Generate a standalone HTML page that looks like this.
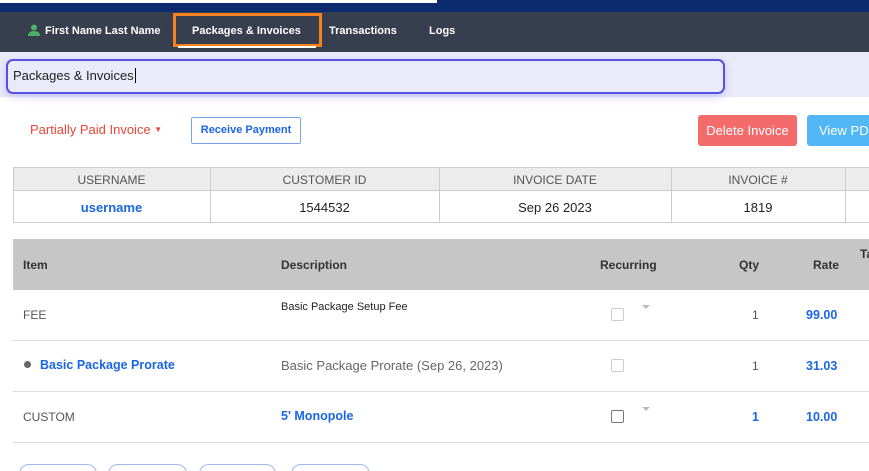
<!DOCTYPE html>
<html><head><style>
*{margin:0;padding:0;box-sizing:border-box}
html,body{width:869px;height:471px;overflow:hidden}
body{background:#fff;font-family:"Liberation Sans",Arial,sans-serif;position:relative}
.a{position:absolute;white-space:nowrap}
.nav{color:#fff;font-weight:bold;font-size:11px;top:25px}
.th{font-size:12px;color:#555;text-align:center;top:173px}
.td{font-size:13px;color:#222;text-align:center;top:200px}
.ih{font-size:12px;font-weight:bold;color:#333;top:258px}
.cb{position:absolute;width:13px;height:13px;border:1.5px solid #ccc;border-radius:2px}
.tri{position:absolute;width:0;height:0;border-left:4px solid transparent;border-right:4px solid transparent;border-top:4px solid #bbb}
.blue{color:#1a66e8;font-weight:bold}
.hl{position:absolute;left:13px;right:0;height:1px;background:#ddd}
.pill{position:absolute;top:464px;height:20px;border:1px solid #9cb9f0;border-radius:10px}
</style></head><body>
<div class="a" style="left:0;top:0;width:869px;height:12px;background:#0c2a6e"></div>
<div class="a" style="left:0;top:0;width:437px;height:3px;background:#fff"></div>
<div class="a" style="left:0;top:12px;width:869px;height:40px;background:#373e4e"></div>
<svg class="a" style="left:28px;top:24px" width="12" height="12" viewBox="0 0 12 12"><circle cx="6" cy="3.5" r="3" fill="#4caf6a"/><path d="M0 12 Q0 7 6 7 Q12 7 12 12Z" fill="#4caf6a"/></svg>
<div class="a nav" style="left:45px">First Name Last Name</div>
<div class="a" style="left:173px;top:13px;width:149px;height:34px;border:3px solid #f5821f"></div>
<div class="a" style="left:178px;top:46px;width:138px;height:2px;background:#fff"></div>
<div class="a nav" style="left:192px">Packages &amp; Invoices</div>
<div class="a nav" style="left:329px">Transactions</div>
<div class="a nav" style="left:429px">Logs</div>
<div class="a" style="left:0;top:52px;width:869px;height:45px;background:#e9ebf9"></div>
<div class="a" style="left:6px;top:59px;width:719px;height:35px;border:2.5px solid #5a4fe0;border-radius:7px;background:#e9ebf9;box-shadow:0 3px 8px rgba(90,79,224,0.25)"></div>
<div class="a" style="left:13px;top:68px;font-size:13px;color:#222">Packages &amp; Invoices<span style="border-left:1px solid #000;margin-left:1px"></span></div>
<div class="a" style="left:30px;top:122px;font-size:13px;color:#e8473a">Partially Paid Invoice <span style="font-size:8px;vertical-align:2px">▼</span></div>
<div class="a" style="left:191px;top:117px;width:110px;height:27px;border:1px solid #7aa3ea;border-radius:2px;color:#1a66e8;font-size:11px;font-weight:bold;text-align:center;line-height:25px">Receive Payment</div>
<div class="a" style="left:698px;top:115px;width:99px;height:31px;background:#f36b6b;border-radius:3px;color:#fff;font-size:13px;text-align:center;line-height:31px">Delete Invoice</div>
<div class="a" style="left:807px;top:115px;width:80px;height:31px;background:#52b8f5;border-radius:3px;color:#fff;font-size:13px;line-height:31px;padding-left:12px">View PDF</div>
<div class="a" style="left:13px;top:167px;width:870px;height:56px;border:1px solid #ccc"></div>
<div class="a" style="left:13px;top:167px;width:870px;height:24px;background:#ececec;border:1px solid #ccc"></div>
<div class="a" style="left:210px;top:167px;width:1px;height:56px;background:#ccc"></div>
<div class="a" style="left:439px;top:167px;width:1px;height:56px;background:#ccc"></div>
<div class="a" style="left:671px;top:167px;width:1px;height:56px;background:#ccc"></div>
<div class="a" style="left:845px;top:167px;width:1px;height:56px;background:#ccc"></div>
<div class="a th" style="left:13px;width:197px">USERNAME</div>
<div class="a th" style="left:210px;width:229px">CUSTOMER ID</div>
<div class="a th" style="left:439px;width:232px">INVOICE DATE</div>
<div class="a th" style="left:671px;width:174px">INVOICE #</div>
<div class="a td blue" style="left:13px;width:197px">username</div>
<div class="a td" style="left:210px;width:229px">1544532</div>
<div class="a td" style="left:439px;width:232px">Sep 26 2023</div>
<div class="a td" style="left:671px;width:174px">1819</div>
<div class="a" style="left:13px;top:239px;width:856px;height:51px;background:#c6c6c6"></div>
<div class="a ih" style="left:23px">Item</div>
<div class="a ih" style="left:281px">Description</div>
<div class="a ih" style="left:600px">Recurring</div>
<div class="a ih" style="left:739px">Qty</div>
<div class="a ih" style="left:813px">Rate</div>
<div class="a ih" style="left:860px;top:247px">Ta</div>
<div class="hl" style="top:340px"></div>
<div class="hl" style="top:391px"></div>
<div class="hl" style="top:442px"></div>
<div class="a" style="left:23px;top:308px;font-size:12px;color:#555">FEE</div>
<div class="a" style="left:281px;top:301px;font-size:11px;color:#222">Basic Package Setup Fee</div>
<div class="cb" style="left:611px;top:308px"></div><div class="tri" style="left:642px;top:305px"></div>
<div class="a" style="left:752px;top:308px;font-size:12px;color:#555">1</div>
<div class="a blue" style="left:806px;top:308px;font-size:12.5px">99.00</div>
<div class="a" style="left:24px;top:361px;width:7px;height:7px;border-radius:50%;background:#666"></div>
<div class="a blue" style="left:40px;top:358px;font-size:12.5px">Basic Package Prorate</div>
<div class="a" style="left:281px;top:358px;font-size:13px;color:#666">Basic Package Prorate (Sep 26, 2023)</div>
<div class="cb" style="left:611px;top:359px"></div>
<div class="a" style="left:752px;top:359px;font-size:12px;color:#555">1</div>
<div class="a blue" style="left:806px;top:359px;font-size:12.5px">31.03</div>
<div class="a" style="left:23px;top:410px;font-size:12px;color:#555">CUSTOM</div>
<div class="a blue" style="left:281px;top:409px;font-size:12.5px">5' Monopole</div>
<div class="cb" style="left:611px;top:410px;border-color:#777"></div><div class="tri" style="left:642px;top:407px"></div>
<div class="a blue" style="left:752px;top:410px;font-size:12.5px">1</div>
<div class="a blue" style="left:806px;top:410px;font-size:12.5px">10.00</div>
<div class="pill" style="left:19px;width:78px"></div>
<div class="pill" style="left:108px;width:79px"></div>
<div class="pill" style="left:199px;width:77px"></div>
<div class="pill" style="left:291px;width:79px"></div>
</body></html>
